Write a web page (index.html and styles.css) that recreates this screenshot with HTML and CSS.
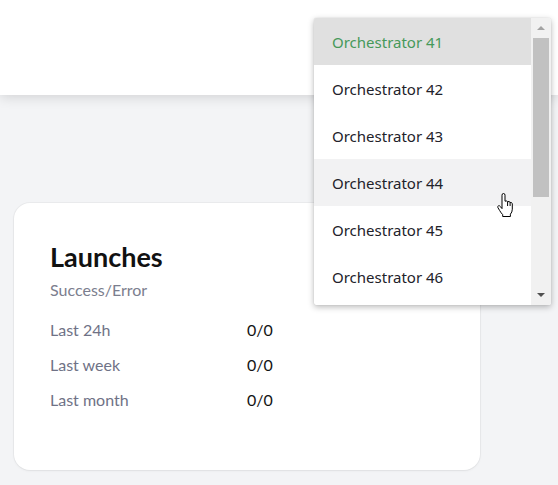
FILE: index.html
```html
<!DOCTYPE html>
<html>
<head>
<meta charset="utf-8">
<link rel="stylesheet" href="styles.css">
</head>
<body>
<header class="topbar"></header>
<main class="content">
  <section class="card">
    <h2 class="card-title">Launches</h2>
    <div class="card-sub">Success/Error</div>
    <div class="stats">
      <div class="stat"><span class="stat-label">Last 24h</span><span class="stat-value">0/0</span></div>
      <div class="stat"><span class="stat-label">Last week</span><span class="stat-value">0/0</span></div>
      <div class="stat"><span class="stat-label">Last month</span><span class="stat-value">0/0</span></div>
    </div>
  </section>
</main>

<div class="dropdown">
  <ul class="options">
    <li class="option selected">Orchestrator 41</li>
    <li class="option">Orchestrator 42</li>
    <li class="option">Orchestrator 43</li>
    <li class="option hover">Orchestrator 44</li>
    <li class="option">Orchestrator 45</li>
    <li class="option">Orchestrator 46</li>
  </ul>
  <div class="scrollbar">
    <div class="sb-btn"><span class="arrow-up"></span></div>
    <div class="sb-track"><div class="sb-thumb"></div></div>
    <div class="sb-btn"><span class="arrow-down"></span></div>
  </div>
</div>

<svg class="cursor" width="18" height="25" viewBox="0 0 18 25">
  <path d="M5 2.2 Q5 0.5 6.5 0.5 Q8 0.5 8 2.2 V8.2 Q9.6 7.4 10.6 8.7 Q12.2 8 13.1 9.4 Q14.8 9 15.3 10.8 V16.2 Q15.3 19.2 13.4 21.2 V23.5 H5.7 V21.6 Q4.2 20.2 2.7 17.6 L0.9 14.6 Q0.3 13.2 1.5 12.8 Q2.7 12.4 3.6 13.8 L5 15.6 Z" fill="#fff" stroke="#000" stroke-width="1" stroke-linejoin="round"/>
  <path d="M10.6 8.7 V13 M13.1 9.4 V13" fill="none" stroke="#000" stroke-width="1"/>
</svg>
</body>
</html>
```

FILE: styles.css
```css
* { box-sizing: border-box; }
html, body { margin: 0; padding: 0; }
body {
  width: 558px;
  height: 485px;
  overflow: hidden;
  background: #f3f4f6;
  font-family: Lato, "Liberation Sans", sans-serif;
  position: relative;
}
.topbar {
  height: 95px;
  background: #fff;
  box-shadow: 0 2px 12px rgba(0, 0, 0, 0.14);
  position: relative;
  z-index: 1;
}
.content {
  padding: 108px 0 0 14px;
}
.card {
  width: 466px;
  height: 267px;
  background: #fff;
  border-radius: 16px;
  box-shadow: 0 0 0 1px rgba(0, 0, 0, 0.035), 0 1px 3px rgba(0, 0, 0, 0.05);
  padding: 38px 36px 0 36px;
}
.card-title {
  margin: 0;
  font-size: 27px;
  line-height: 32px;
  font-weight: 700;
  color: #111;
}
.card-sub {
  margin-top: 7px;
  font-size: 16px;
  line-height: 20px;
  color: #7b7e8e;
}
.stats {
  margin-top: 20px;
  display: flex;
  flex-direction: column;
  gap: 15px;
}
.stat {
  display: flex;
  font-size: 16px;
  line-height: 20px;
}
.stat-label {
  width: 197px;
  color: #6f7286;
}
.stat-value {
  color: #141414;
}

.dropdown {
  position: absolute;
  left: 314px;
  top: 18px;
  width: 237px;
  height: 287px;
  background: #fff;
  display: flex;
  border-radius: 2px;
  box-shadow: 0 2px 6px rgba(0, 0, 0, 0.28), 0 0 1px rgba(0, 0, 0, 0.2);
  z-index: 5;
  overflow: hidden;
}
.options {
  list-style: none;
  margin: 0;
  padding: 0;
  flex: 1;
  overflow: hidden;
}
.option {
  height: 47px;
  display: flex;
  align-items: center;
  padding-left: 18px;
  font-family: "Noto Sans", "Open Sans", sans-serif;
  font-size: 15px;
  color: #22222a;
}
.option.selected {
  background: #e0e0e0;
  color: #46995a;
}
.option.hover {
  background: #f2f2f3;
}
.scrollbar {
  width: 20px;
  background: #f1f1f1;
  display: flex;
  flex-direction: column;
}
.sb-btn {
  height: 20px;
  display: flex;
  align-items: center;
  justify-content: center;
}
.sb-track {
  flex: 1;
}
.sb-thumb {
  margin: 0 2px;
  height: 159px;
  background: #c1c1c1;
}
.arrow-up {
  width: 0;
  height: 0;
  border-left: 4px solid transparent;
  border-right: 4px solid transparent;
  border-bottom: 4px solid #a3a3a3;
}
.arrow-down {
  width: 0;
  height: 0;
  border-left: 4px solid transparent;
  border-right: 4px solid transparent;
  border-top: 4px solid #505050;
}
.cursor {
  position: absolute;
  left: 497px;
  top: 193px;
  z-index: 10;
}
```
